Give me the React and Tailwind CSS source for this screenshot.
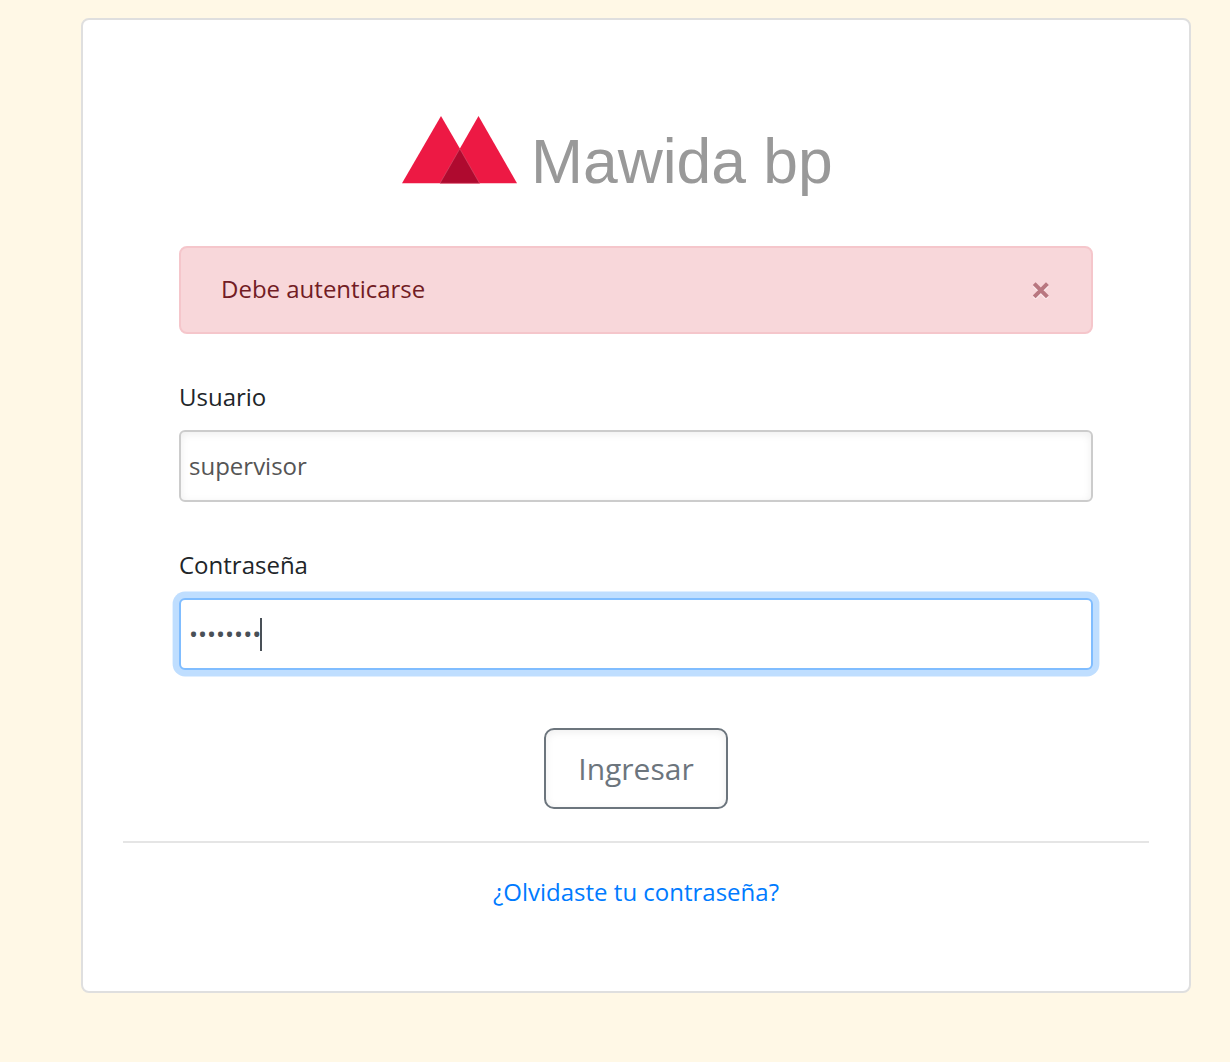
import { useState } from "react";

function Logo() {
  return (
    <div className="flex h-[84px] items-start pl-[223px]">
      <svg className="mt-[2px] h-[68px] w-[116px] shrink-0" viewBox="0 0 116 68">
        <path d="M39 0 78 67.3H0Z" fill="#ed1944" />
        <path d="M76.5 0 115 67.3H38Z" fill="#ed1944" />
        <path d="M57.8 32.8 77.5 67.3H38Z" fill="#af0a2f" stroke="#d8768a" strokeWidth=".4" />
      </svg>
      <span className="ml-[13px] mt-[12px] whitespace-nowrap font-['Liberation_Sans',sans-serif] text-[62.4px] leading-[72px] text-[#999999]">
        Mawida bp
      </span>
    </div>
  );
}

function Alert({ children, onClose }) {
  return (
    <div className="mt-[48px] flex h-[88px] items-center justify-between rounded-[8px] border-2 border-[#f5c6cb] bg-[#f8d7da] pl-[40px] pr-[41px] text-[#721c24]">
      <span className="pb-[2px]">{children}</span>
      <button type="button" aria-label="Cerrar" onClick={onClose}>
        <svg className="h-[18px] w-[18px]" viewBox="0 0 18 18" fill="none" strokeWidth="4">
          <path d="M2.2 4.3 15.4 17.5M15.4 4.3 2.2 17.5" stroke="#fff" strokeOpacity=".5" />
          <path d="M2.2 2.7 15.4 15.9M15.4 2.7 2.2 15.9" stroke="#b97780" />
        </svg>
      </button>
    </div>
  );
}

export default function App() {
  const [alertOpen, setAlertOpen] = useState(true);

  return (
    <div className="h-[1062px] w-[1230px] bg-[#fff8e6] pl-[81px] pt-[18px] font-['Open_Sans',sans-serif] text-[24px] leading-[36px] text-[#212529]">
      <main className="h-[975px] w-[1110px] rounded-[8px] border-2 border-[#dfdfdf] bg-white px-[40px] pt-[94px]">
        <form className="px-[56px]" onSubmit={(e) => e.preventDefault()}>
          <Logo />
          {alertOpen && <Alert onClose={() => setAlertOpen(false)}>Debe autenticarse</Alert>}
          <label className="mt-[45px] block" htmlFor="user">Usuario</label>
          <input
            id="user"
            defaultValue="supervisor"
            className="mt-[15px] block h-[72px] w-full rounded-[6px] border-2 border-[#cccccc] bg-white px-[8px] pb-[2px] text-[#555555] shadow-[inset_0_2px_8px_rgba(0,0,0,0.07)] outline-none"
          />
          <span className="mt-[45px] block">Contraseña</span>
          <div className="mt-[15px] flex h-[72px] items-center rounded-[6px] border-2 border-[#80bdff] bg-white pl-[8px] text-[#495057] shadow-[0_0_0_6.4px_#bfdeff]">
            <span>••••••••</span>
            <span className="-ml-px h-[33px] w-[2px] bg-[#495057]" />
          </div>
          <button
            type="submit"
            className="mx-auto mt-[58px] block h-[81px] w-[184px] rounded-[10px] border-2 border-[#6c757d] text-[30px] leading-[45px] text-[#6c757d] shadow-[inset_0_2px_8px_rgba(0,0,0,0.07)]"
          >
            Ingresar
          </button>
        </form>
        <hr className="mt-[32px] border-0 border-t-2 border-[#e5e5e5]" />
        <div className="mt-[31px] text-center">
          <a href="#" className="text-[#007bff]">¿Olvidaste tu contraseña?</a>
        </div>
      </main>
    </div>
  );
}
